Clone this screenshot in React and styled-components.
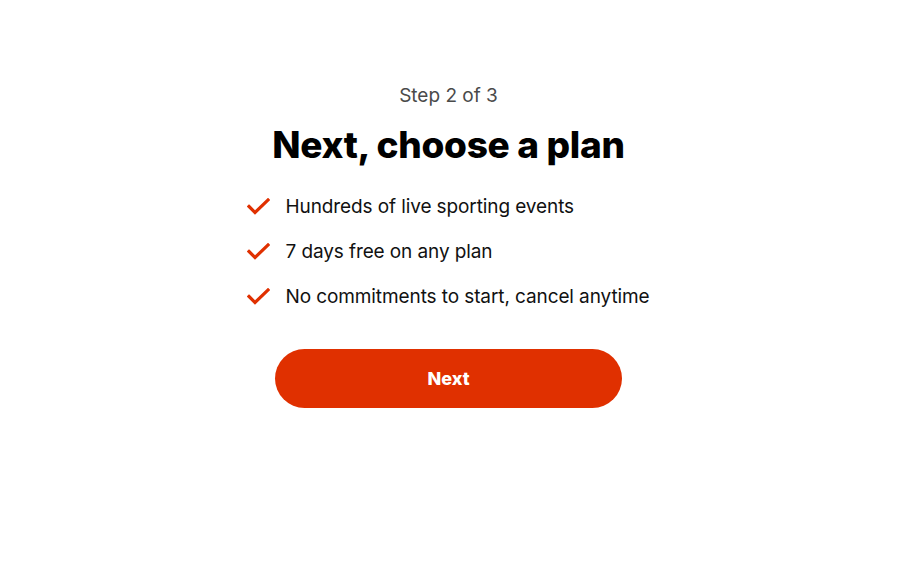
import React from 'react';
import styled, { createGlobalStyle } from 'styled-components';

const Global = createGlobalStyle`
  body {
    margin: 0;
    background: #fff;
    font-family: Inter, "Noto Sans", sans-serif;
  }
`;

const Page = styled.main`
  display: flex;
  flex-direction: column;
  align-items: center;
  padding: 84px 5px 0 0;
  min-height: 567px;
  box-sizing: border-box;
`;

const Step = styled.div`
  font-size: 19px;
  line-height: 24px;
  color: #4a4a4a;
`;

const Title = styled.h1`
  margin: 14px 0 0 0;
  font-size: 37px;
  line-height: 46px;
  font-weight: 800;
  color: #000;
  letter-spacing: -0.3px;
`;

const List = styled.ul`
  list-style: none;
  margin: 27px 0 0 0;
  padding: 0;
  display: flex;
  flex-direction: column;
  gap: 21px;
`;

const Item = styled.li`
  display: flex;
  align-items: center;
  gap: 15px;
  font-size: 19px;
  line-height: 24px;
  letter-spacing: -0.1px;
  color: #111;
`;

const Check = () => (
  <svg width="23" height="19" viewBox="0 0 23 19" fill="none">
    <path d="M2 8.5 L8 14.5 L21 2" stroke="#e03000" strokeWidth="3.2" strokeLinecap="square" strokeLinejoin="miter" />
  </svg>
);

const Button = styled.button`
  margin-top: 40px;
  width: 347px;
  height: 59px;
  border: none;
  border-radius: 30px;
  background: #e03000;
  color: #fff;
  font-family: inherit;
  font-size: 18px;
  font-weight: 800;
  cursor: pointer;
`;

const items = [
  'Hundreds of live sporting events',
  '7 days free on any plan',
  'No commitments to start, cancel anytime',
];

export default function App() {
  return (
    <>
      <Global />
      <Page>
        <Step>Step 2 of 3</Step>
        <Title>Next, choose a plan</Title>
        <List>
          {items.map((t) => (
            <Item key={t}>
              <Check />
              {t}
            </Item>
          ))}
        </List>
        <Button>Next</Button>
      </Page>
    </>
  );
}
